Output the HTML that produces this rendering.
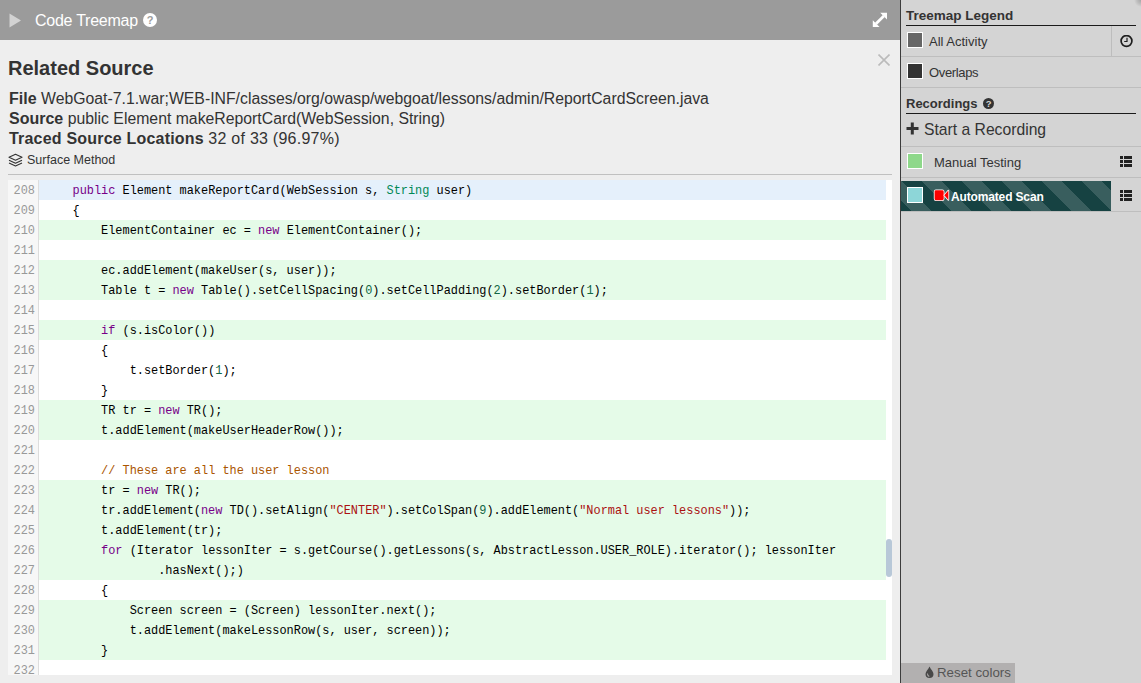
<!DOCTYPE html>
<html><head><meta charset="utf-8">
<style>
*{box-sizing:border-box;margin:0;padding:0}
html,body{width:1141px;height:683px;overflow:hidden;background:#eeeeee;font-family:"Liberation Sans",sans-serif}
.abs{position:absolute}
#left{position:absolute;left:0;top:0;width:900px;height:683px;background:#eeeeee}
#hdr{position:absolute;left:0;top:0;width:900px;height:40px;background:#9b9b9b}
#sep{position:absolute;left:900px;top:0;width:1px;height:683px;background:#3c3c3c}
#right{position:absolute;left:901px;top:0;width:240px;height:683px;background:#d4d4d4}
.t{position:absolute;white-space:pre;line-height:20px}
#code{position:absolute;left:8px;top:180px;width:884px;height:495px;background:#fff;overflow:hidden}
#gut{position:absolute;left:0;top:0;width:31px;height:495px;background:#f7f7f7;border-right:1px solid #ddd}
.row{position:absolute;left:31px;width:847px;height:20px;font-family:"Liberation Mono",monospace;font-size:11.9px;line-height:22px;white-space:pre;color:#000;padding-left:5px}
.ln{position:absolute;left:0;width:27px;text-align:right;height:20px;font-family:"Liberation Mono",monospace;font-size:11.9px;line-height:22px;color:#999}
.hl{position:absolute;left:0;width:240px;height:1px;background:#bebebe}
.sw{position:absolute;left:6px;width:16px;height:16px;border:1px solid #fff}
.sw i{display:block;width:100%;height:100%}
.nf{font-size:15.8px}
.g{background:#e5fbe8}
.b{background:#e5f0fb}
.k{color:#770088}
.ty{color:#008855}
.s{color:#aa1111}
.c{color:#aa5500}
.n{color:#116644}
</style></head><body>
<div id="left">
  <div id="hdr">
    <svg class="abs" style="left:9px;top:13px" width="13" height="15" viewBox="0 0 13 15"><path d="M0.5 0.5 L12 7.5 L0.5 14.5 Z" fill="#d2d2d2"/></svg>
    <div class="t" style="left:35px;top:11px;font-size:16px;letter-spacing:-0.25px;color:#fff;line-height:20px">Code Treemap</div>
    <svg class="abs" style="left:143px;top:13px" width="14" height="14" viewBox="0 0 14 14"><circle cx="7" cy="7" r="7" fill="#fff"/><text x="7" y="11.2" text-anchor="middle" font-family="Liberation Sans" font-weight="bold" font-size="11" fill="#9b9b9b">?</text></svg>
    <svg class="abs" style="left:872px;top:12px" width="16" height="16" viewBox="0 0 16 16"><path d="M15 0.8 L15 7.6 L8.2 0.8 Z M0.8 15 L7.6 15 L0.8 8.2 Z" fill="#fff"/><path d="M4 11.8 L11.8 4" stroke="#fff" stroke-width="2.8"/></svg>
  </div>
  <svg class="abs" style="left:878px;top:54px" width="12" height="12" viewBox="0 0 12 12"><path d="M0.5 0.5 L11.5 11.5 M11.5 0.5 L0.5 11.5" stroke="#bbbbbb" stroke-width="1.6"/></svg>
  <div class="t" style="left:8px;top:58px;font-size:20px;font-weight:bold;color:#333;line-height:20px">Related Source</div>
  <div class="t" style="left:9px;top:89px;font-size:16px;color:#333"><b>File</b> <span class="nf">WebGoat-7.1.war;WEB-INF/classes/org/owasp/webgoat/lessons/admin/ReportCardScreen.java</span></div>
  <div class="t" style="left:9px;top:109px;font-size:16px;color:#333"><b>Source</b> <span class="nf">public Element makeReportCard(WebSession, String)</span></div>
  <div class="t" style="left:9px;top:129px;font-size:16px;color:#333"><b style="letter-spacing:0.2px">Traced Source Locations</b> <span style="letter-spacing:0.25px">32 of 33 (96.97%)</span></div>
  <svg class="abs" style="left:8px;top:153px" width="15" height="14" viewBox="0 0 15 14"><path d="M7.5 1.2 L14 4.2 L7.5 7.2 L1 4.2 Z M1 7.2 L7.5 10.2 L14 7.2 M1 9.9 L7.5 12.9 L14 9.9" fill="none" stroke="#333" stroke-width="1.1" stroke-linejoin="round"/></svg>
  <div class="t" style="left:27px;top:150px;font-size:12.5px;color:#333">Surface Method</div>
  <div class="abs" style="left:8px;top:174px;width:884px;height:1px;background:#c0c0c0"></div>
  <div id="code">
    <div id="gut"></div>
    <div class="abs" style="left:878px;top:0;width:6px;height:495px;background:#fff"></div>
    <div class="abs" style="left:878px;top:359px;width:6px;height:38px;background:#b8c8d8;border-radius:3px"></div>
    <!-- rows -->
    <div class="ln" style="top:0">208</div><div class="row b" style="top:0">    <span class="k">public</span> Element makeReportCard(WebSession s, <span class="ty">String</span> user)</div>
    <div class="ln" style="top:20px">209</div><div class="row" style="top:20px">    {</div>
    <div class="ln" style="top:40px">210</div><div class="row g" style="top:40px">        ElementContainer ec = <span class="k">new</span> ElementContainer();</div>
    <div class="ln" style="top:60px">211</div><div class="row" style="top:60px"></div>
    <div class="ln" style="top:80px">212</div><div class="row g" style="top:80px">        ec.addElement(makeUser(s, user));</div>
    <div class="ln" style="top:100px">213</div><div class="row g" style="top:100px">        Table t = <span class="k">new</span> Table().setCellSpacing(<span class="n">0</span>).setCellPadding(<span class="n">2</span>).setBorder(<span class="n">1</span>);</div>
    <div class="ln" style="top:120px">214</div><div class="row" style="top:120px"></div>
    <div class="ln" style="top:140px">215</div><div class="row g" style="top:140px">        <span class="k">if</span> (s.isColor())</div>
    <div class="ln" style="top:160px">216</div><div class="row" style="top:160px">        {</div>
    <div class="ln" style="top:180px">217</div><div class="row" style="top:180px">            t.setBorder(<span class="n">1</span>);</div>
    <div class="ln" style="top:200px">218</div><div class="row" style="top:200px">        }</div>
    <div class="ln" style="top:220px">219</div><div class="row g" style="top:220px">        TR tr = <span class="k">new</span> TR();</div>
    <div class="ln" style="top:240px">220</div><div class="row g" style="top:240px">        t.addElement(makeUserHeaderRow());</div>
    <div class="ln" style="top:260px">221</div><div class="row" style="top:260px"></div>
    <div class="ln" style="top:280px">222</div><div class="row" style="top:280px">        <span class="c">// These are all the user lesson</span></div>
    <div class="ln" style="top:300px">223</div><div class="row g" style="top:300px">        tr = <span class="k">new</span> TR();</div>
    <div class="ln" style="top:320px">224</div><div class="row g" style="top:320px">        tr.addElement(<span class="k">new</span> TD().setAlign(<span class="s">"CENTER"</span>).setColSpan(<span class="n">9</span>).addElement(<span class="s">"Normal user lessons"</span>));</div>
    <div class="ln" style="top:340px">225</div><div class="row g" style="top:340px">        t.addElement(tr);</div>
    <div class="ln" style="top:360px">226</div><div class="row g" style="top:360px">        <span class="k">for</span> (Iterator lessonIter = s.getCourse().getLessons(s, AbstractLesson.USER_ROLE).iterator(); lessonIter</div>
    <div class="ln" style="top:380px">227</div><div class="row g" style="top:380px">                .hasNext();)</div>
    <div class="ln" style="top:400px">228</div><div class="row" style="top:400px">        {</div>
    <div class="ln" style="top:420px">229</div><div class="row g" style="top:420px">            Screen screen = (Screen) lessonIter.next();</div>
    <div class="ln" style="top:440px">230</div><div class="row g" style="top:440px">            t.addElement(makeLessonRow(s, user, screen));</div>
    <div class="ln" style="top:460px">231</div><div class="row g" style="top:460px">        }</div>
    <div class="ln" style="top:480px">232</div><div class="row" style="top:480px"></div>
  </div>
</div>
<div id="sep"></div>
<div class="abs" style="left:1126px;top:-15px;width:30px;height:30px;background:radial-gradient(circle at 15px 15px, rgba(0,0,0,0.22) 0, rgba(0,0,0,0.1) 4px, rgba(0,0,0,0) 7px);z-index:5"></div>
<div id="right">
  <div class="t" style="left:5px;top:6px;font-size:13.5px;font-weight:bold;color:#333">Treemap Legend</div>
  <div class="abs" style="left:5px;top:25px;width:230px;height:1px;background:#1a1a1a"></div>
  <div class="sw" style="top:32px"><i style="background:#666"></i></div>
  <div class="t" style="left:28px;top:32px;font-size:13px;color:#333">All Activity</div>
  <div class="abs" style="left:210px;top:26px;width:1px;height:30px;background:#bdbdbd"></div>
  <svg class="abs" style="left:219px;top:35px" width="13" height="13" viewBox="0 0 13 13"><circle cx="6.5" cy="6" r="5.4" fill="none" stroke="#1e1e1e" stroke-width="1.7"/><path d="M7 2.8 V6.5 H4.2" fill="none" stroke="#1e1e1e" stroke-width="1.2"/></svg>
  <div class="hl" style="top:56px"></div>
  <div class="sw" style="top:63px"><i style="background:#333"></i></div>
  <div class="t" style="left:28px;top:63px;font-size:13px;letter-spacing:-0.35px;color:#333">Overlaps</div>
  <div class="hl" style="top:87px"></div>
  <div class="t" style="left:5px;top:94px;font-size:13px;font-weight:bold;color:#333">Recordings</div>
  <svg class="abs" style="left:82px;top:98px" width="12" height="12" viewBox="0 0 12 12"><circle cx="5.5" cy="5.5" r="5.5" fill="#333"/><text x="5.6" y="9.3" text-anchor="middle" font-family="Liberation Sans" font-weight="bold" font-size="9.5" fill="#d4d4d4">?</text></svg>
  <div class="abs" style="left:5px;top:113px;width:230px;height:1px;background:#1a1a1a"></div>
  <svg class="abs" style="left:5px;top:122px" width="13" height="13" viewBox="0 0 13 13"><path d="M6.3 0.5 V12.5 M0.5 6.5 H12.5" stroke="#333" stroke-width="3"/></svg>
  <div class="t" style="left:23px;top:120px;font-size:15.7px;color:#333">Start a Recording</div>
  <div class="hl" style="top:146px"></div>
  <div class="sw" style="top:153px"><i style="background:#8ed88a"></i></div>
  <div class="t" style="left:33px;top:153px;font-size:13px;color:#333">Manual Testing</div>
  <svg class="abs lst" style="left:219px;top:156px" width="12" height="11" viewBox="0 0 12 11"><path d="M0 0h3v3H0zM4 0h8v3H4zM0 4h3v3H0zM4 4h8v3H4zM0 8h3v3H0zM4 8h8v3H4z" fill="#222"/></svg>
  <div class="hl" style="top:177px"></div>
  <div class="abs" style="left:0;top:181px;width:210px;height:30px;background-color:#164242;background-image:linear-gradient(45deg,rgba(255,255,255,.15) 25%,transparent 25%,transparent 50%,rgba(255,255,255,.15) 50%,rgba(255,255,255,.15) 75%,transparent 75%,transparent);background-size:40px 40px;background-position:21px 0"></div>
  <div class="sw" style="top:187px"><i style="background:#8dd6d8"></i></div>
  <svg class="abs" style="left:32px;top:189px" width="17" height="13" viewBox="0 0 17 13"><g fill="#f00" stroke="#fff" stroke-width="1.6" stroke-linejoin="round" paint-order="stroke"><path d="M2.8 1.3 H9.3 Q10.7 1.3 10.7 2.7 V9.8 Q10.7 11.2 9.3 11.2 H2.8 Q1.6 11.2 1.6 9.8 V2.7 Q1.6 1.3 2.8 1.3 Z"/><path d="M11.3 6.25 L15.4 1.5 V11 Z"/></g></svg>
  <div class="t" style="left:50px;top:187px;font-size:12px;font-weight:bold;letter-spacing:-0.15px;color:#fff">Automated Scan</div>
  <svg class="abs lst" style="left:219px;top:190px" width="12" height="11" viewBox="0 0 12 11"><path d="M0 0h3v3H0zM4 0h8v3H4zM0 4h3v3H0zM4 4h8v3H4zM0 8h3v3H0zM4 8h8v3H4z" fill="#222"/></svg>
  <div class="hl" style="top:211px"></div>
  <div class="abs" style="left:0;top:663px;width:114px;height:20px;background:#b2b0b0"></div>
  <svg class="abs" style="left:24px;top:666px" width="9" height="12" viewBox="0 0 9 12"><path d="M4.5 0.5 C5.5 3 8.5 5.5 8.5 8 A4 4 0 0 1 0.5 8 C0.5 5.5 3.5 3 4.5 0.5 Z" fill="#484848"/><path d="M2.4 7.6 Q2.4 9.8 4.3 10.4" stroke="#a8a6a6" stroke-width="1.1" fill="none"/></svg>
  <div class="t" style="left:36px;top:663px;font-size:13.3px;color:#555">Reset colors</div>
</div>
</body></html>
